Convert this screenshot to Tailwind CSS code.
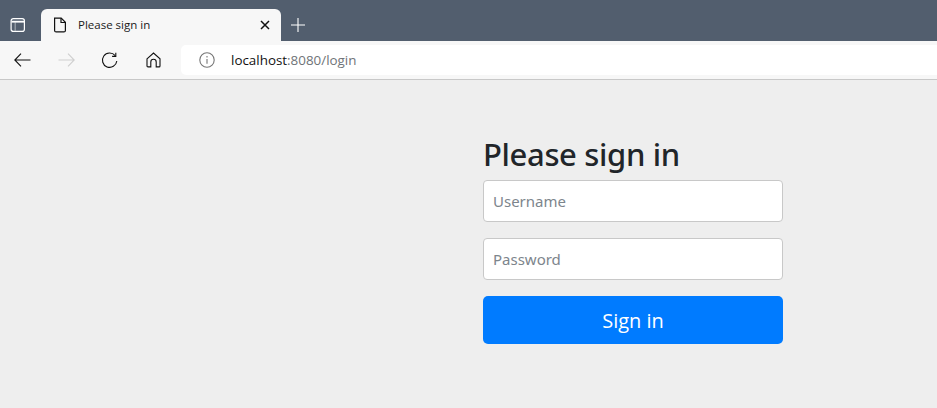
<!DOCTYPE html>
<html lang="en">
<head>
    <meta charset="UTF-8">
    <title>Please sign in</title>
    <script src="https://cdn.jsdelivr.net/npm/@tailwindcss/browser@4"></script>
</head>
<body class="h-[408px] w-[937px] overflow-hidden bg-[#eeeeee] font-['Open_Sans','Noto_Sans',sans-serif]">
    <!-- tab strip -->
    <div class="flex h-[41px] items-end bg-[#525e6e]">
        <div class="flex h-full w-[41px] items-center pl-[10px] pt-[9px]">
            <svg width="16" height="16" viewBox="0 0 16 16" fill="none" stroke="#fff" stroke-width="1.2"><rect x="1.100" y="1.600" width="13.300" height="12.800" rx="2.200"/><path d="M1.500 4.700h12.500" stroke-width="1.800"/><path d="M5.200 5.200v8.600" stroke-opacity=".45"/></svg>
        </div>
        <div class="flex h-[32px] w-[240px] items-center rounded-t-[6px] bg-[#f7f7f7] pl-[12px] pr-[11px]">
            <svg width="14" height="16" viewBox="0 0 14 16" fill="none" stroke="#111" stroke-width="1.2"><path d="M1.600 1.100h6.600l4.200 4.200v8.100a1.500 1.500 0 0 1-1.500 1.500H3.100a1.500 1.500 0 0 1-1.500-1.500z"/><path d="M8 1.200v4.300h4.300"/></svg>
            <span class="ml-[11px] flex-1 text-[11.5px] text-[#1a1a1a]">Please sign in</span>
            <svg width="10" height="10" viewBox="0 0 10 10" stroke="#111" stroke-width="1.5"><path d="M1 1l8 8M9 1l-8 8"/></svg>
        </div>
        <div class="flex h-[32px] w-[34px] items-center justify-center">
            <svg width="14" height="14" viewBox="0 0 14 14" stroke="#fff" stroke-width="1.1"><path d="M7 0v14M0 7h14"/></svg>
        </div>
    </div>
    <!-- toolbar -->
    <div class="flex h-[39px] items-center border-b border-[#c8c8c8] bg-[#f7f7f7]">
        <div class="flex w-[181px] items-center">
            <svg class="ml-[14px]" width="17" height="14" viewBox="0 0 17 14" fill="none" stroke="#111" stroke-width="1.1"><path d="M16.500 7H.8M7 .7L.8 7 7 13.300"/></svg>
            <svg class="ml-[27px]" width="17" height="14" viewBox="0 0 17 14" fill="none" stroke="#cfcfcf" stroke-width="1.1"><path d="M.5 7h15.700M10 .7L16.200 7 10 13.300"/></svg>
            <svg class="ml-[26px]" width="17" height="17" viewBox="0 0 17 17" fill="none" stroke="#111" stroke-width="1.1"><path d="M14.200 3.600A7.200 7.200 0 1 0 15.800 9"/><path d="M14.800.8v3.600h-3.700"/></svg>
            <svg class="ml-[28px]" width="15" height="16" viewBox="0 0 15 16" fill="none" stroke="#111" stroke-width="1.1"><path d="M1 6.800L7.500 1 14 6.800v7.100a1 1 0 0 1-1 1h-2.800V10a2.700 2.700 0 0 0-5.400 0v4.900H2a1 1 0 0 1-1-1z"/></svg>
        </div>
        <div class="flex h-[30px] flex-1 items-center rounded-l-[5px] bg-white pl-[18px]">
            <svg width="16" height="16" viewBox="0 0 16 16" fill="none" stroke="#767676" stroke-width="1.1"><circle cx="8" cy="8" r="7.200"/><path d="M8 7v4.800M8 4.100v1.300"/></svg>
            <span class="ml-[16px] text-[13.4px] text-[#111]">localhost<span class="text-[#6f7377]">:8080/login</span></span>
        </div>
    </div>
    <!-- sign in form -->
    <main class="ml-[483px] flex w-[300px] flex-col">
        <h2 class="mt-[51px] h-[49px] font-['Noto_Sans',sans-serif] text-[31px] font-medium leading-[47px] tracking-[-0.35px] text-[#212529]">Please sign in</h2>
        <input class="h-[42px] rounded-[4px] border border-[#c8c8c8] bg-white px-[9px] font-['Noto_Sans',sans-serif] text-[15px] placeholder:text-[#7d858c]" placeholder="Username">
        <input class="mt-[16px] h-[42px] rounded-[4px] border border-[#c8c8c8] bg-white px-[9px] font-['Noto_Sans',sans-serif] text-[15px] placeholder:text-[#7d858c]" placeholder="Password">
        <button class="mt-[16px] h-[48px] rounded-[5px] bg-[#007bff] pt-[2px] text-[20px] text-white">Sign in</button>
    </main>
</body>
</html>
